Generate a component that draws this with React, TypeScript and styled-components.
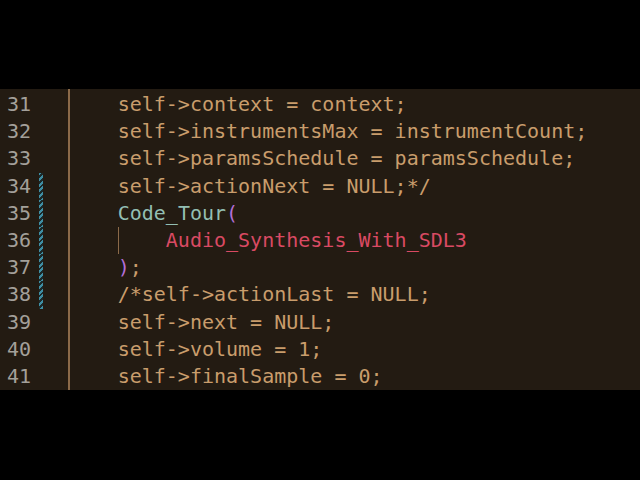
import React from "react";
import styled, { createGlobalStyle } from "styled-components";

const Global = createGlobalStyle`
  html, body { margin: 0; padding: 0; background: #000; }
  body { width: 640px; height: 480px; overflow: hidden; }
`;

const Screen = styled.div`
  width: 640px;
  height: 480px;
  background: #000;
  padding-top: 89px;
  box-sizing: border-box;
`;

const Editor = styled.div`
  display: flex;
  background: #231b12;
  height: 301px;
  padding-top: 2px;
  box-sizing: border-box;
  font-family: "DejaVu Sans Mono", monospace;
  font-size: 20px;
`;

const Gutter = styled.div`
  display: flex;
  flex-direction: column;
  width: 68px;
  flex-shrink: 0;
`;

const GutterRow = styled.div`
  display: flex;
  align-items: stretch;
  height: 27.2px;
`;

const LineNo = styled.span`
  width: 31px;
  padding-left: 7px;
  color: #a3a09a;
  line-height: 27.2px;
`;

const Change = styled.span<{ $on: boolean }>`
  width: 4px;
  margin-left: 1px;
  background: ${(p) =>
    p.$on
      ? "repeating-linear-gradient(135deg, #3f8ea3 0 2px, #1c2a2a 2px 4px)"
      : "transparent"};
`;

const Divider = styled.div`
  width: 1.5px;
  margin-top: -2px;
  background: #8b6a49;
  flex-shrink: 0;
`;

const Code = styled.div`
  display: flex;
  flex-direction: column;
`;

const Line = styled.div`
  height: 27.2px;
  line-height: 27.2px;
  white-space: pre;
  color: #c99d6c;
`;

const Fn = styled.span`
  color: #93bfb3;
`;
const Paren = styled.span`
  color: #b36fd6;
`;
const Str = styled.span`
  color: #d94a63;
`;

const Guide = styled.span`
  display: inline-block;
  width: 12.04px;
  height: 27.2px;
  vertical-align: top;
  border-left: 1.5px solid #8b6a49;
  box-sizing: border-box;
  margin-left: 0.5px;
  margin-right: -0.5px;
`;

const lines: React.ReactNode[] = [
  "    self->context = context;",
  "    self->instrumentsMax = instrumentCount;",
  "    self->paramsSchedule = paramsSchedule;",
  "    self->actionNext = NULL;*/",
  <>
    {"    "}
    <Fn>Code_Tour</Fn>
    <Paren>(</Paren>
  </>,
  <>
    {"    "}
    <Guide />
    {"   "}
    <Str>Audio_Synthesis_With_SDL3</Str>
  </>,
  <>
    {"    "}
    <Paren>)</Paren>;
  </>,
  "    /*self->actionLast = NULL;",
  "    self->next = NULL;",
  "    self->volume = 1;",
  "    self->finalSample = 0;",
];

export default function App() {
  return (
    <Screen>
      <Global />
      <Editor>
        <Gutter>
          {lines.map((_, i) => {
            const n = 31 + i;
            return (
              <GutterRow key={n}>
                <LineNo>{n}</LineNo>
                <Change $on={n >= 34 && n <= 38} />
              </GutterRow>
            );
          })}
        </Gutter>
        <Divider />
        <Code>
          {lines.map((l, i) => (
            <Line key={i}>{l}</Line>
          ))}
        </Code>
      </Editor>
    </Screen>
  );
}
